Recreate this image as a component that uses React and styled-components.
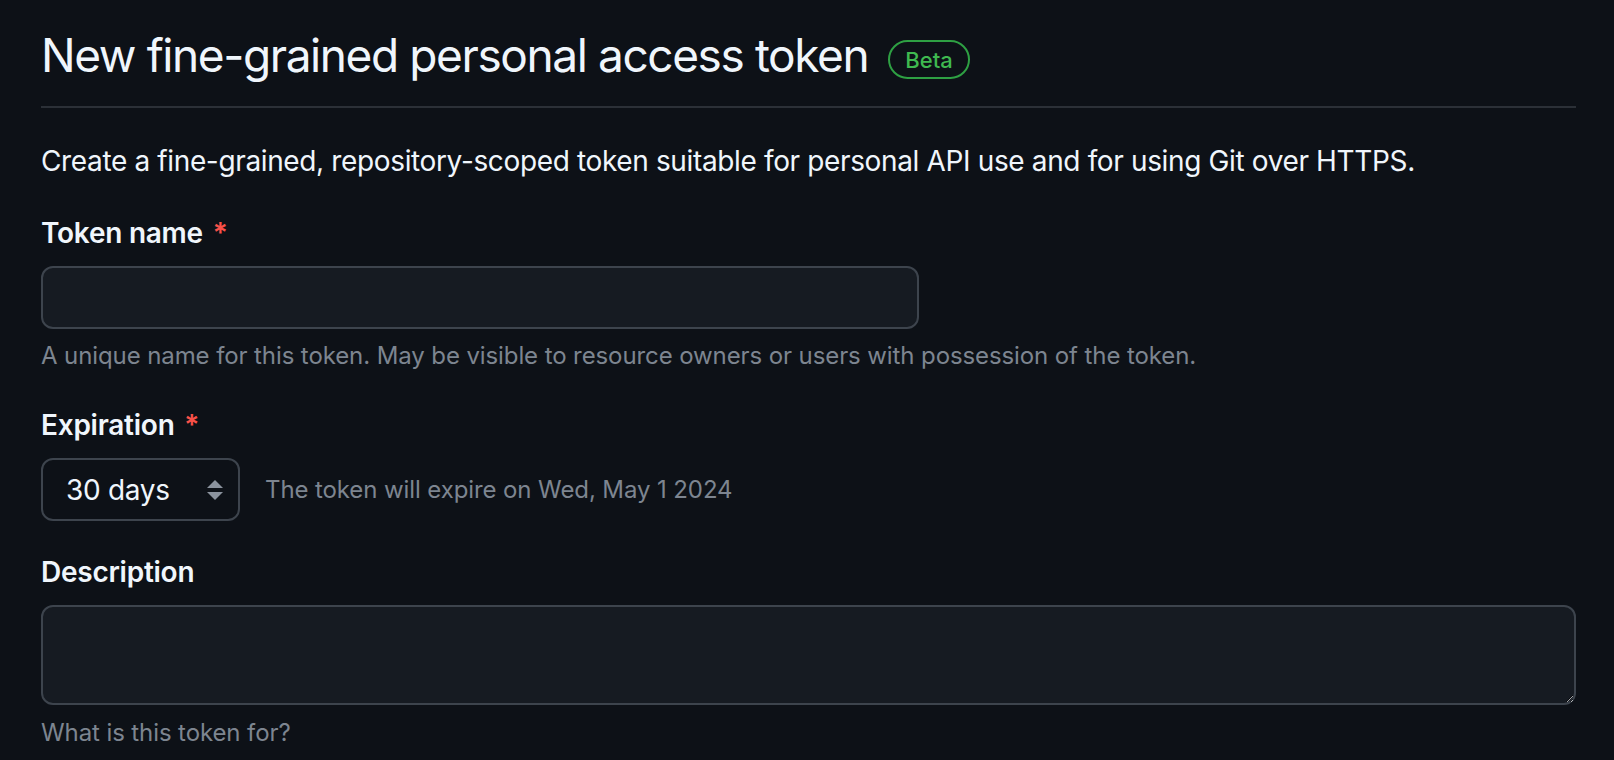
import React from 'react';
import styled, { createGlobalStyle } from 'styled-components';

const GlobalStyle = createGlobalStyle`
  html, body {
    margin: 0;
    padding: 0;
    background: #0d1117;
  }
  body {
    font-family: Inter, "Liberation Sans", sans-serif;
    color: #e6edf3;
    -webkit-font-smoothing: antialiased;
  }
  *, *::before, *::after { box-sizing: border-box; }
`;

const Page = styled.main`
  padding: 0 38px 0 41px;
  min-height: 760px;
`;

const Subhead = styled.header`
  display: flex;
  align-items: center;
  gap: 20px;
  padding: 19px 0 15px;
  border-bottom: 2px solid #2b3037;
`;

const Heading = styled.h1`
  margin: 0;
  font-size: 46px;
  line-height: 72px;
  font-weight: 400;
  letter-spacing: -1.4px;
  color: #f0f6fc;
`;

const Badge = styled.span`
  display: inline-flex;
  align-items: center;
  height: 39px;
  margin-top: 9px;
  padding: 0 15px;
  border: 2px solid #2ea043;
  border-radius: 999px;
  color: #3fb950;
  font-size: 22px;
  font-weight: 500;
`;

const Lead = styled.p`
  margin: 32px 0 0;
  font-size: 28px;
  line-height: 42px;
  letter-spacing: -0.36px;
  color: #f0f6fc;
`;

const FormGroup = styled.div`
  margin-top: 30px;
`;

const Label = styled.label`
  display: block;
  font-size: 28px;
  line-height: 42px;
  font-weight: 600;
  letter-spacing: -0.25px;
  color: #f0f6fc;
`;

const Required = styled.span`
  color: #f85149;
  margin-left: 3px;
`;

const TextInput = styled.input`
  display: block;
  width: ${(p) => p.$width || '100%'};
  height: 63px;
  margin-top: 12px;
  padding: 0 22px;
  background: #161b22;
  border: 2px solid #3d444d;
  border-radius: 12px;
  color: #f0f6fc;
  font: inherit;
  font-size: 28px;
  outline: none;
`;

const Note = styled.p`
  margin: ${(p) => p.$gap || 9}px 0 0;
  font-size: 24px;
  line-height: 36px;
  letter-spacing: -0.1px;
  color: #7d8590;
`;

const InlineRow = styled.div`
  display: flex;
  align-items: center;
  gap: 25px;
  margin-top: 12px;
`;

const SelectButton = styled.button`
  display: flex;
  align-items: center;
  justify-content: space-between;
  width: 199px;
  height: 63px;
  padding: 0 15px 0 23px;
  background: #0d1117;
  border: 2px solid #3d444d;
  border-radius: 12px;
  color: #f0f6fc;
  font: inherit;
  font-size: 28px;
  letter-spacing: -0.3px;
  cursor: pointer;
`;

const InlineNote = styled.span`
  font-size: 24px;
  line-height: 36px;
  letter-spacing: -0.1px;
  color: #7d8590;
`;

const TextArea = styled.textarea`
  display: block;
  width: 100%;
  height: 100px;
  margin-top: 12px;
  padding: 16px 22px;
  background: #161b22;
  border: 2px solid #3d444d;
  border-radius: 12px;
  color: #f0f6fc;
  font: inherit;
  font-size: 28px;
  resize: vertical;
  color-scheme: dark;
  outline: none;
`;

const SelectArrows = () => (
  <svg width="16" height="20" viewBox="0 0 16 20" aria-hidden="true">
    <path d="M8 0 L16 8 L0 8 Z" fill="#8b939e" />
    <path d="M0 12 L16 12 L8 20 Z" fill="#8b939e" />
  </svg>
);

export default function App() {
  return (
    <>
      <GlobalStyle />
      <Page>
        <Subhead>
          <Heading>New fine-grained personal access token</Heading>
          <Badge>Beta</Badge>
        </Subhead>
        <Lead>
          Create a fine-grained, repository-scoped token suitable for personal API use and for using Git over HTTPS.
        </Lead>

        <FormGroup>
          <Label htmlFor="token-name">
            Token name<Required> *</Required>
          </Label>
          <TextInput id="token-name" type="text" $width="878px" />
          <Note>A unique name for this token. May be visible to resource owners or users with possession of the token.</Note>
        </FormGroup>

        <FormGroup>
          <Label>
            Expiration<Required> *</Required>
          </Label>
          <InlineRow>
            <SelectButton type="button">
              <span>30 days</span>
              <SelectArrows />
            </SelectButton>
            <InlineNote>The token will expire on Wed, May 1 2024</InlineNote>
          </InlineRow>
        </FormGroup>

        <FormGroup>
          <Label htmlFor="token-description">Description</Label>
          <TextArea id="token-description" />
          <Note $gap={10}>What is this token for?</Note>
        </FormGroup>
      </Page>
    </>
  );
}
